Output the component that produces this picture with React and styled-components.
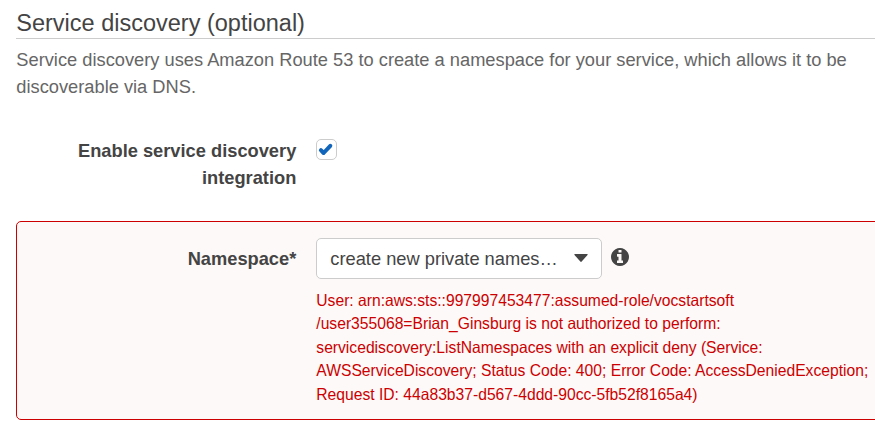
import React from "react";
import styled, { createGlobalStyle } from "styled-components";

const GlobalStyle = createGlobalStyle`
  * { box-sizing: border-box; }
  html, body { margin: 0; background: #fff; overflow: hidden; }
  body {
    font-family: "Liberation Sans", Arial, sans-serif;
    font-size: 18.28px;
    line-height: 27px;
    color: #444;
  }
`;

const Page = styled.main`
  width: 875px;
  height: 422px;
  padding: 9px 0 0 16.3px;
  overflow: hidden;
`;

const Title = styled.h2`
  margin: 0;
  height: 30px;
  border-bottom: 1px solid #ccc;
  font-size: 23.5px;
  font-weight: 400;
  line-height: 28px;
`;

const Description = styled.p`
  margin: 7px 0 37px;
  color: #666;
  white-space: nowrap;
`;

const FormRow = styled.div`
  display: grid;
  grid-template-columns: 280px 1fr;
  column-gap: 20px;
`;

const ErrorPanel = styled.section`
  width: 900px;
  height: 199px;
  margin-top: 30px;
  padding: 16px 0 0;
  border: 1px solid #c00;
  border-radius: 5px;
  background: #fdf9f8;

  ${FormRow} {
    grid-template-columns: 279px 1fr;
  }
`;

const Label = styled.label`
  text-align: right;
  font-weight: 700;
  padding-top: ${(p) => p.$offset || 0}px;
`;

const Checkbox = styled.span`
  display: flex;
  align-items: center;
  justify-content: center;
  width: 21px;
  height: 21px;
  margin-top: 2px;
  border: 1px solid #ccc;
  border-radius: 5px;
  background: #fff;
`;

const Controls = styled.div`
  display: flex;
  align-items: center;
  gap: 9px;
`;

const Select = styled.button`
  display: flex;
  align-items: center;
  justify-content: space-between;
  width: 286px;
  height: 41px;
  padding: 0 13px 1px;
  border: 1px solid #ccc;
  border-radius: 5px;
  background: #fff;
  color: #444;
  font: inherit;
`;

const Icon = styled.svg`
  display: block;
  flex: none;
`;

const InfoIcon = styled(Icon)`
  margin-top: -3px;
`;

const ErrorText = styled.p`
  margin: 10px 0 0;
  color: #c00;
  font-size: 15.67px;
  line-height: 23.4px;
  white-space: nowrap;
`;

const errorLines = [
  "User: arn:aws:sts::997997453477:assumed-role/vocstartsoft",
  "/user355068=Brian_Ginsburg is not authorized to perform:",
  "servicediscovery:ListNamespaces with an explicit deny (Service:",
  "AWSServiceDiscovery; Status Code: 400; Error Code: AccessDeniedException;",
  "Request ID: 44a83b37-d567-4ddd-90cc-5fb52f8165a4)",
];

export default function App() {
  return (
    <>
      <GlobalStyle />
      <Page>
        <Title>Service discovery (optional)</Title>
        <Description>
          Service discovery uses Amazon Route 53 to create a namespace for your service, which allows it to be
          <br />
          discoverable via DNS.
        </Description>
        <FormRow>
          <Label>
            Enable service discovery
            <br />
            integration
          </Label>
          <Checkbox role="checkbox" aria-checked="true">
            <Icon width="19" height="19" viewBox="0 0 19 19">
              <path
                d="M3.9 10.2 L6.6 13 L13.3 5.8"
                fill="none"
                stroke="#1166bb"
                strokeWidth="4"
                strokeLinecap="round"
                strokeLinejoin="round"
              />
            </Icon>
          </Checkbox>
        </FormRow>
        <ErrorPanel>
          <FormRow>
            <Label $offset={7}>Namespace*</Label>
            <div>
              <Controls>
                <Select>
                  create new private names…
                  <Icon width="14" height="8" viewBox="0 0 14 8">
                    <path d="M.8 0h12.4q.8.2.3.9L7.7 7.6q-.7.6-1.4 0L.5.9Q0 .2.8 0z" fill="#444" />
                  </Icon>
                </Select>
                <InfoIcon width="18" height="18" viewBox="128 128 1536 1536">
                  <path
                    fill="#444"
                    d="M1152 1376v-160q0-14-9-23t-23-9h-96v-512q0-14-9-23t-23-9h-320q-14 0-23 9t-9 23v160q0 14 9 23t23 9h96v320h-96q-14 0-23 9t-9 23v160q0 14 9 23t23 9h448q14 0 23-9t9-23zm-128-896v-160q0-14-9-23t-23-9h-192q-14 0-23 9t-9 23v160q0 14 9 23t23 9h192q14 0 23-9t9-23zm640 416q0 209-103 385.5t-279.5 279.5-385.5 103-385.5-103-279.5-279.5-103-385.5 103-385.5 279.5-279.5 385.5-103 385.5 103 279.5 279.5 103 385.5z"
                  />
                </InfoIcon>
              </Controls>
              <ErrorText>
                {errorLines.map((line) => (
                  <React.Fragment key={line}>
                    {line}
                    <br />
                  </React.Fragment>
                ))}
              </ErrorText>
            </div>
          </FormRow>
        </ErrorPanel>
      </Page>
    </>
  );
}
